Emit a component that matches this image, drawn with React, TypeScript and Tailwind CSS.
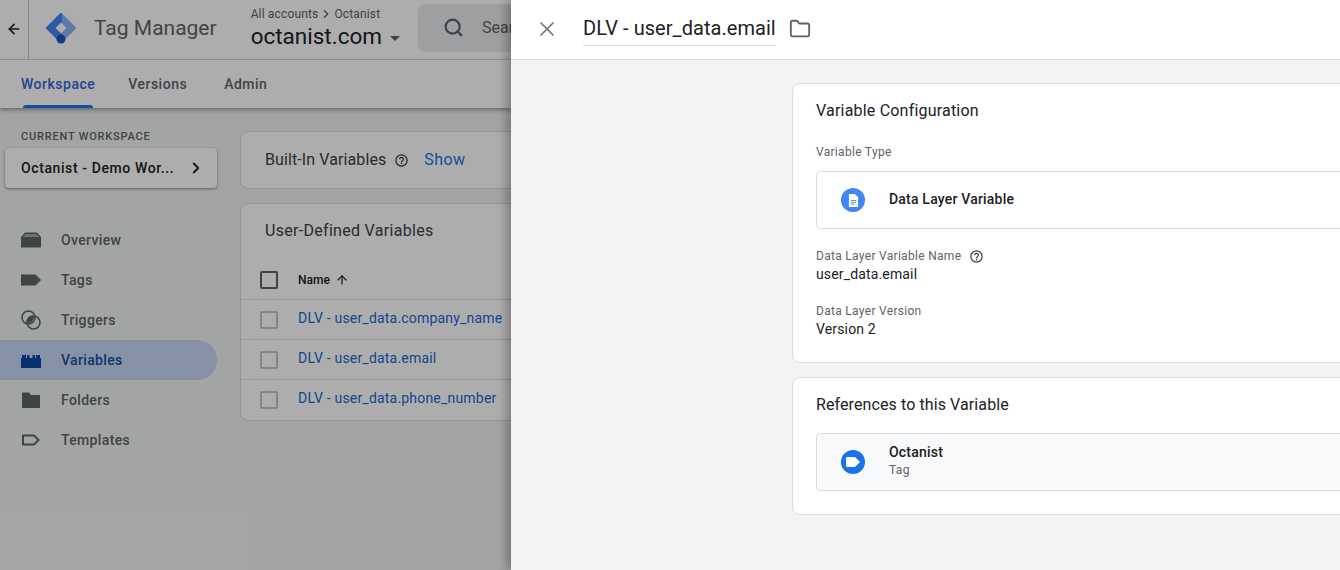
import { ArrowLeft, ArrowUp, ChevronRight, Folder, Search, X } from "lucide-react";

const font = "font-['Roboto',sans-serif]";

function HelpIcon({ className }: { className: string }) {
  return (
    <svg viewBox="0 0 24 24" className={className} fill="currentColor">
      <path d="M12 2a10 10 0 1 0 0 20 10 10 0 0 0 0-20zm0 18a8 8 0 1 1 0-16 8 8 0 0 1 0 16zm-1-4h2v2h-2v-2zm1-10a4 4 0 0 0-4 4h2a2 2 0 1 1 4 0c0 2-3 1.75-3 5h2c0-2.25 3-2.5 3-5a4 4 0 0 0-4-4z" />
    </svg>
  );
}

function GtmLogo() {
  return (
    <svg viewBox="0 0 32 32" className="w-8 h-8">
      <path d="M16 2L30 16 16 30 2 16z" fill="#8ab4f8" stroke="#8ab4f8" strokeWidth="2" strokeLinejoin="round" />
      <path d="M16 2L2 16 16 30z" fill="#4285f4" stroke="#4285f4" strokeWidth="2" strokeLinejoin="round" />
      <path d="M16 10.5L10.5 16 16 21.5 21.5 16z" fill="#fff" />
      <circle cx="16" cy="27" r="4.5" fill="#1a56c4" />
    </svg>
  );
}

function NavIcon({ name }: { name: string }) {
  const cls = "w-5 h-5";
  if (name === "Overview")
    return (
      <svg viewBox="0 0 20 20" className={cls} fill="currentColor">
        <path d="M4 2.5h12l4 4.5v10.5H0V7z" />
        <path d="M1.5 7l3-3h11l3 3z" fill="#a3a5a8" />
      </svg>
    );
  if (name === "Tags")
    return (
      <svg viewBox="0 0 20 20" className={cls} fill="currentColor">
        <path d="M0 4.5h14.5L20 10l-5.5 5.5H0z" />
      </svg>
    );
  if (name === "Triggers")
    return (
      <svg viewBox="0 0 20 20" className={cls} fill="none" stroke="currentColor" strokeWidth="1.5">
        <circle cx="7.5" cy="7.5" r="6.5" />
        <circle cx="12.5" cy="12.5" r="6.5" />
        <path d="M7 7.5a6 6 0 0 1 6-.5 6 6 0 0 1-6 6z" fill="currentColor" stroke="none" />
      </svg>
    );
  if (name === "Variables")
    return (
      <svg viewBox="0 0 20 20" className={cls} fill="currentColor">
        <path d="M0 8h1V5h4v3h1V5h2.5v3h3V5H14v3h1V5h4v3h1v10H0z" />
      </svg>
    );
  if (name === "Folders")
    return (
      <svg viewBox="0 0 20 20" className={cls} fill="currentColor">
        <path d="M1 2.5h7l2 2.5h9v13H1z" />
      </svg>
    );
  return (
    <svg viewBox="0 0 20 20" className={cls} fill="none" stroke="currentColor" strokeWidth="2">
      <path d="M2 5.5h11L17.5 10 13 14.5H2z" />
    </svg>
  );
}

const navItems = ["Overview", "Tags", "Triggers", "Variables", "Folders", "Templates"];
const rows = ["DLV - user_data.company_name", "DLV - user_data.email", "DLV - user_data.phone_number"];

function Background() {
  return (
    <div className="w-[511px] h-full shrink-0 bg-[#f1f3f4] overflow-hidden relative">
      <header className="h-[60px] bg-white border-b border-[#dadce0] flex items-center">
        <div className="w-[29px] h-full border-r border-[#c8cacc] flex items-center justify-center shrink-0">
          <ArrowLeft className="w-4 h-4 mb-[2px] text-[#202124]" strokeWidth={2.5} />
        </div>
        <div className="ml-4 mb-[3px] shrink-0"><GtmLogo /></div>
        <span className="ml-[17px] mb-[2px] text-[21px] text-[#5f6368] whitespace-nowrap">Tag Manager</span>
        <div className="ml-[17px] mb-[2px] w-px h-8 bg-[#dadce0]" />
        <div className="ml-[17px] shrink-0">
          <div className="flex items-center text-xs text-[#5f6368] leading-4 tracking-[0.15px] mt-[-3px]">
            All accounts
            <ChevronRight className="w-[14px] h-[14px] mx-px" />
            Octanist
          </div>
          <div className="flex items-center text-[22.5px] leading-7 text-[#202124]">
            octanist.com
            <span className="ml-2 mt-1 w-0 h-0 border-x-[5px] border-x-transparent border-t-[5px] border-t-[#5f6368]" />
          </div>
        </div>
        <div className="ml-[18px] mb-[4px] h-12 w-[400px] shrink-0 rounded-lg bg-[#e8eaed] flex items-center pl-[25px] text-[#5f6368]">
          <Search className="w-[21px] h-[21px]" strokeWidth={2.5} />
          <span className="ml-[18px] text-base">Search workspace</span>
        </div>
      </header>
      <nav className="h-12 bg-white shadow-[0_2px_4px_rgba(60,64,67,0.5)] flex relative text-sm font-medium text-[#5f6368] tracking-[0.5px]">
        <div className="ml-[21px] relative flex items-center text-[#3367d6]">
          Workspace
          <div className="absolute left-[2px] right-[2px] bottom-0 h-[3px] rounded-t bg-[#1a73e8]" />
        </div>
        <div className="ml-[33px] flex items-center">Versions</div>
        <div className="ml-[37px] flex items-center">Admin</div>
      </nav>
      <div className="flex">
        <aside className="w-[240px] shrink-0 pr-[23px]">
          <div className="pl-[21px] mt-[23px] text-[11px] leading-[12px] font-medium tracking-[0.8px] text-[#5f6368]">CURRENT WORKSPACE</div>
          <div className="ml-[5px] mt-[5px] h-10 bg-white rounded shadow-[0_1px_3px_rgba(60,64,67,0.6)] flex items-center justify-between pl-4 pr-[12px] text-sm font-medium tracking-[0.6px] text-[#202124]">
            Octanist - Demo Wor...
            <ChevronRight className="w-[18px] h-[18px]" strokeWidth={2.5} />
          </div>
          <div className="mt-8">
            {navItems.map((n) => (
              <div
                key={n}
                className={`h-10 flex items-center pl-[21px] gap-5 text-sm font-medium tracking-[0.35px] rounded-r-full ${n === "Variables" ? "bg-[#c9d8f5] text-[#174ea6]" : "text-[#5f6368]"}`}
              >
                <span className={n === "Variables" ? "text-[#0d47a1]" : "text-[#5f6368]"}>
                  <NavIcon name={n} />
                </span>
                {n}
              </div>
            ))}
          </div>
        </aside>
        <main className="flex-1 min-w-0 pt-[23px]">
          <section className="w-[400px] h-[58px] bg-white border border-[#dadce0] rounded-lg flex items-center pl-6 text-base text-[#3c4043]">
            <span className="mb-px tracking-[0.1px]">Built-In Variables</span>
            <HelpIcon className="w-[15px] h-[15px] ml-2 text-[#3c4043]" />
            <span className="ml-[15px] mb-px tracking-[0.4px] text-[#1a73e8]">Show</span>
          </section>
          <section className="mt-[14px] w-[400px] bg-white border border-[#dadce0] rounded-lg pb-px">
            <div className="h-14 pl-6 pb-[2px] flex items-center text-base tracking-[0.3px] text-[#3c4043]">User-Defined Variables</div>
            <div className="h-[39px] flex items-center pl-[19px] text-xs font-medium text-[#202124]">
              <span className="w-[18px] h-[18px] border-2 border-[#5f6368] rounded-[2px] shrink-0" />
              <span className="ml-5">Name</span>
              <ArrowUp className="w-[14px] h-[14px] ml-[5px]" />
            </div>
            {rows.map((r) => (
              <div key={r} className="h-10 border-t border-[#dadce0] flex items-center pl-[19px] text-sm tracking-[0.2px] text-[#1967d2] whitespace-nowrap">
                <span className="w-[18px] h-[18px] border-2 border-[#c4c6c8] rounded-[2px] shrink-0" />
                <span className="ml-5 mb-1">{r}</span>
              </div>
            ))}
          </section>
        </main>
      </div>
      {/* scrim behind the slide-in panel */}
      <div className="absolute inset-0 bg-black/32" />
    </div>
  );
}

function Panel() {
  return (
    <div className="flex-1 min-w-0 h-full bg-[#f1f3f4] shadow-[-4px_0_10px_rgba(0,0,0,0.3)] z-10 flex flex-col">
      <header className="h-[60px] shrink-0 bg-white border-b border-[#dadce0] flex items-center">
        <X className="ml-6 mb-[2px] w-6 h-6 text-[#757575]" strokeWidth={1.75} />
        <div className="ml-6 mt-[-1px] h-[34px] border-b border-[#dadce0] text-xl leading-[32px] tracking-[0.05px] text-[#202124] whitespace-nowrap">DLV - user_data.email</div>
        <Folder className="ml-[13px] mb-[2px] w-[22px] h-[22px] text-[#5f6368]" strokeWidth={2} />
      </header>
      <div className="pl-[281px] pt-[23px] flex flex-col gap-[14px] w-[1000px]">
        <section className="h-[280px] bg-white border border-[#dadce0] rounded-lg pl-[23px] pt-[17px]">
          <h2 className="text-base leading-5 tracking-[0.2px] text-[#202124]">Variable Configuration</h2>
          <div className="mt-[23px] text-xs leading-4 tracking-[0.3px] text-[#5f6368]">Variable Type</div>
          <div className="mt-[11px] h-[58px] border border-[#dadce0] rounded flex items-center pl-6">
            <span className="w-6 h-6 rounded-full bg-[#4285f4] flex items-center justify-center shrink-0">
              <svg viewBox="0 0 12 14" className="w-[11px] h-[13px]">
                <path d="M1 0h6.5L11 3.5V14H1z" fill="#fff" />
                <path d="M3 7h6M3 9h6M3 11h4" stroke="#4285f4" strokeWidth="1" />
              </svg>
            </span>
            <span className="ml-6 mb-[2px] text-sm font-medium tracking-[0.2px] text-[#202124]">Data Layer Variable</span>
          </div>
          <div className="mt-[19px] flex items-center text-xs leading-4 tracking-[0.3px] text-[#5f6368]">
            Data Layer Variable Name
            <HelpIcon className="w-[15px] h-[15px] ml-2 text-[#3c4043]" />
          </div>
          <div className="text-sm leading-5 tracking-[0.15px] text-[#202124]">user_data.email</div>
          <div className="mt-[19px] text-xs leading-4 tracking-[0.3px] text-[#5f6368]">Data Layer Version</div>
          <div className="text-sm leading-5 tracking-[0.15px] text-[#202124]">Version 2</div>
        </section>
        <section className="h-[138px] bg-white border border-[#dadce0] rounded-lg pl-[23px] pt-[17px]">
          <h2 className="text-base leading-5 tracking-[0.1px] text-[#202124]">References to this Variable</h2>
          <div className="mt-[18px] h-[58px] bg-[#f8f9fa] border border-[#dadce0] rounded flex items-center pl-6">
            <span className="w-6 h-6 rounded-full bg-[#1a73e8] flex items-center justify-center shrink-0">
              <svg viewBox="0 0 14 10" className="w-[14px] h-[10px]">
                <path d="M0 1a1 1 0 0 1 1-1h8l5 5-5 5H1a1 1 0 0 1-1-1z" fill="#fff" />
              </svg>
            </span>
            <div className="ml-6 mb-[2px]">
              <div className="text-sm leading-[18px] font-medium tracking-[0.2px] text-[#202124]">Octanist</div>
              <div className="text-xs leading-[18px] tracking-[0.3px] text-[#5f6368]">Tag</div>
            </div>
          </div>
        </section>
      </div>
    </div>
  );
}

export default function App() {
  return (
    <div className={`${font} w-[1340px] h-[570px] flex overflow-hidden`}>
      <Background />
      <Panel />
    </div>
  );
}
